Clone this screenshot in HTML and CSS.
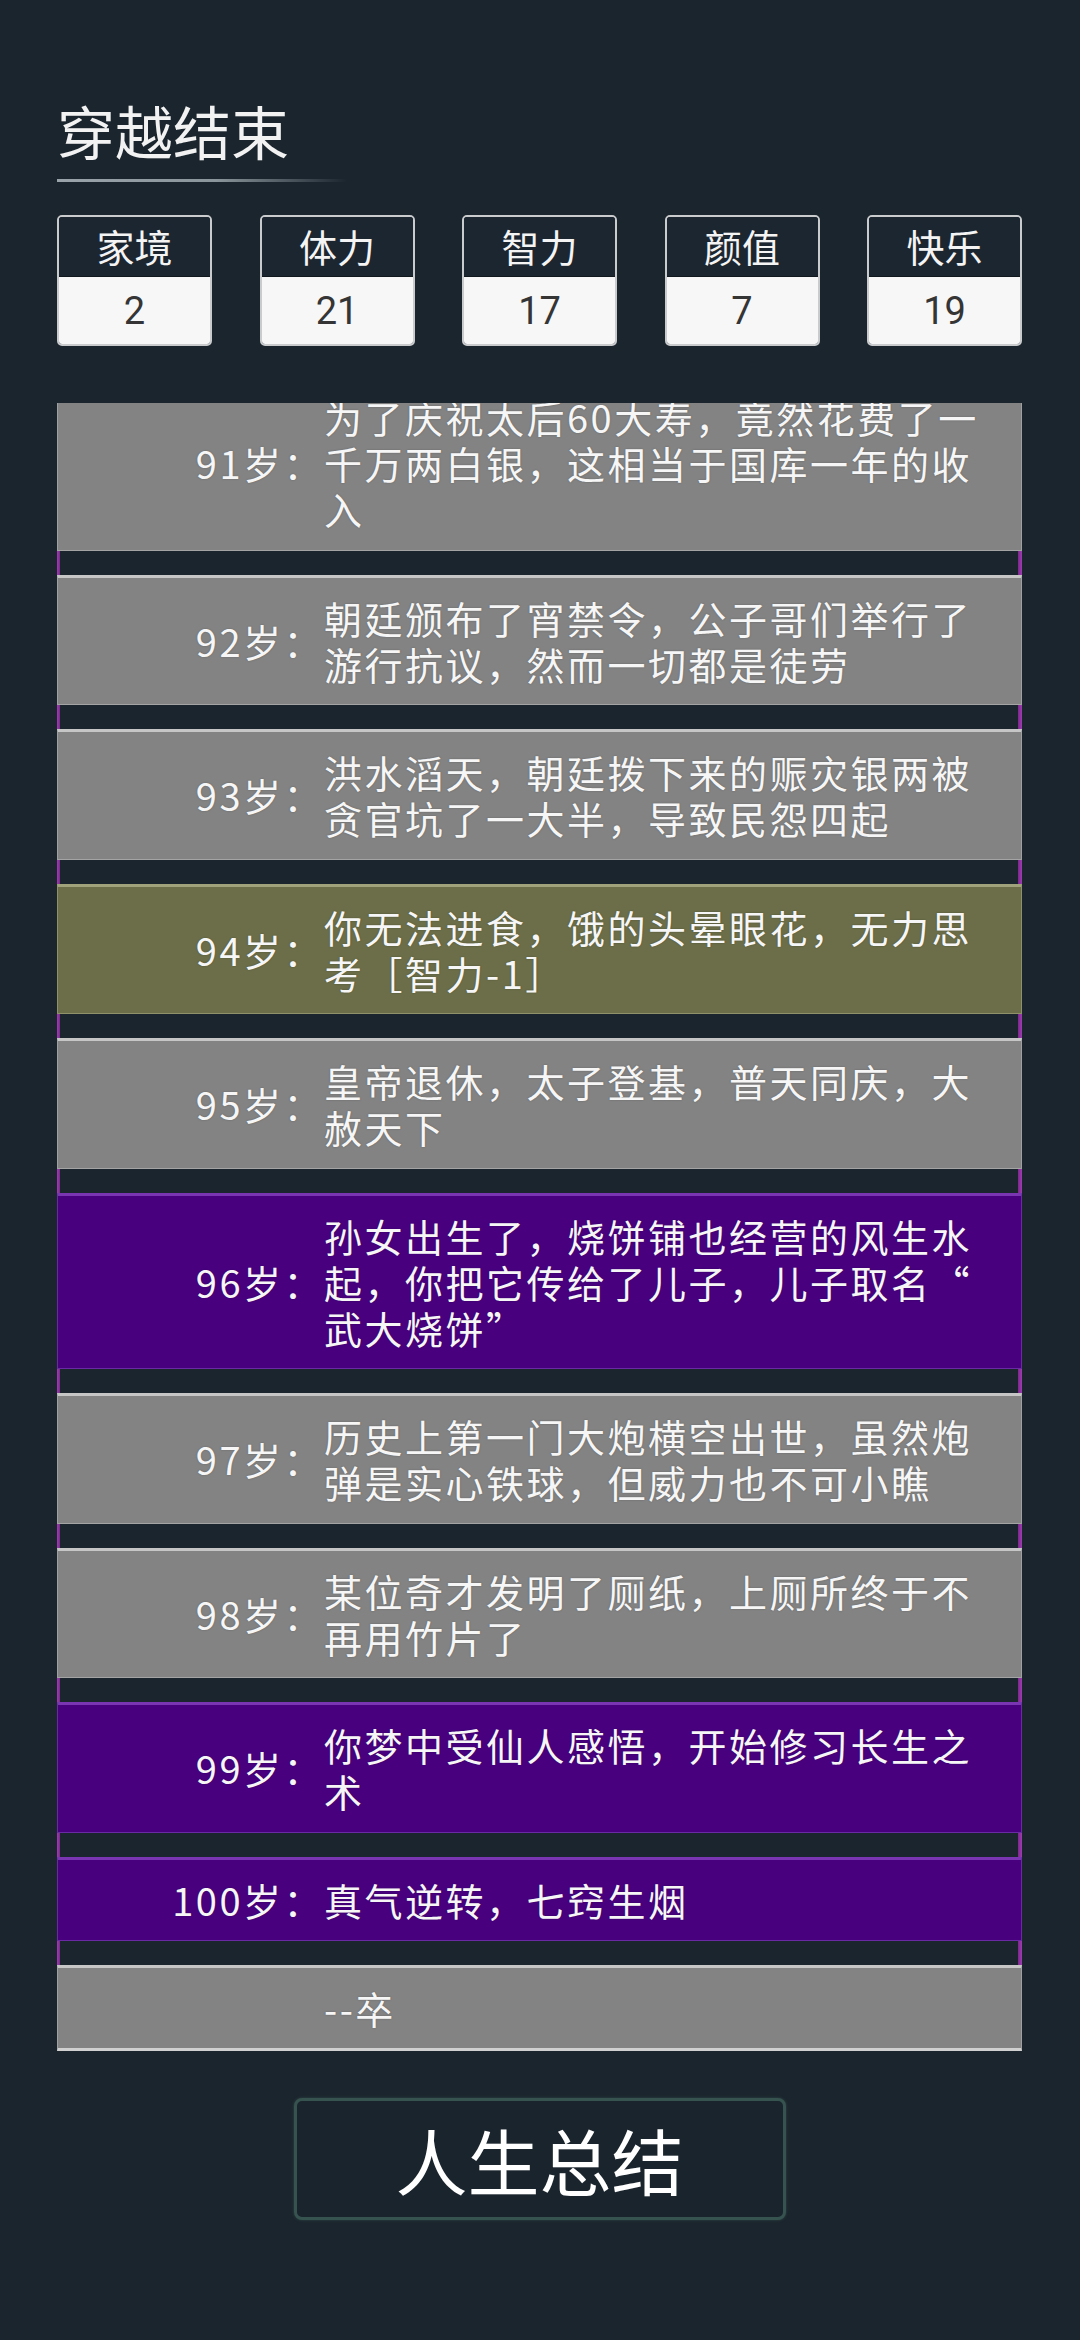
FILE: index.html
```html
<!DOCTYPE html>
<html lang="zh-CN">
<head>
<meta charset="utf-8">
<title>穿越结束</title>
<link rel="stylesheet" href="styles.css">
</head>
<body>
<div class="page">
  <header class="head">
    <h1 class="title">穿越结束</h1>
    <div class="rule"></div>
  </header>

  <div class="stats">
    <div class="stat"><div class="stat-name">家境</div><div class="stat-val">2</div></div>
    <div class="stat"><div class="stat-name">体力</div><div class="stat-val">21</div></div>
    <div class="stat"><div class="stat-name">智力</div><div class="stat-val">17</div></div>
    <div class="stat"><div class="stat-name">颜值</div><div class="stat-val">7</div></div>
    <div class="stat"><div class="stat-name">快乐</div><div class="stat-val">19</div></div>
  </div>

  <div class="log">
    <div class="log-inner">
      <div class="entry"><div class="age">91岁：</div><div class="text">为了庆祝太后60大寿，竟然花费了一千万两白银，这相当于国库一年的收入</div></div>
      <div class="entry"><div class="age">92岁：</div><div class="text">朝廷颁布了宵禁令，公子哥们举行了游行抗议，然而一切都是徒劳</div></div>
      <div class="entry"><div class="age">93岁：</div><div class="text">洪水滔天，朝廷拨下来的赈灾银两被贪官坑了一大半，导致民怨四起</div></div>
      <div class="entry bad"><div class="age">94岁：</div><div class="text">你无法进食，饿的头晕眼花，无力思考［智力-1］</div></div>
      <div class="entry"><div class="age">95岁：</div><div class="text">皇帝退休，太子登基，普天同庆，大赦天下</div></div>
      <div class="entry rare"><div class="age">96岁：</div><div class="text">孙女出生了，烧饼铺也经营的风生水起，你把它传给了儿子，儿子取名“武大烧饼”</div></div>
      <div class="entry"><div class="age">97岁：</div><div class="text">历史上第一门大炮横空出世，虽然炮弹是实心铁球，但威力也不可小瞧</div></div>
      <div class="entry"><div class="age">98岁：</div><div class="text">某位奇才发明了厕纸，上厕所终于不再用竹片了</div></div>
      <div class="entry rare"><div class="age">99岁：</div><div class="text">你梦中受仙人感悟，开始修习长生之术</div></div>
      <div class="entry rare"><div class="age">100岁：</div><div class="text">真气逆转，七窍生烟</div></div>
      <div class="entry end"><div class="age"></div><div class="text">--卒</div></div>
    </div>
  </div>

  <button class="summary" type="button">人生总结</button>
</div>
</body>
</html>
```

FILE: styles.css
```css
* { box-sizing: border-box; }

html, body {
  margin: 0;
  padding: 0;
  background: #1b252d;
}

body {
  min-height: 2340px;
  font-family: "Noto Sans CJK SC", "Noto Sans", sans-serif;
  color: #f4f4f4;
}

.page {
  width: 1080px;
  padding: 97px 58px 0 57px;
}

.head {
  display: flex;
  flex-direction: column;
}

.title {
  margin: 0;
  font-size: 58px;
  line-height: 67px;
  font-weight: 400;
  color: #f2f2f2;
  letter-spacing: 0;
}

.rule {
  margin-top: 15px;
  width: 290px;
  height: 3px;
  background: linear-gradient(to right, #9aa3aa 0%, #8a949b 55%, rgba(138,148,155,0) 100%);
}

.stats {
  margin-top: 33px;
  display: flex;
  justify-content: space-between;
}

.stat {
  width: 155px;
  height: 131px;
  border: 2px solid #c9cbcd;
  border-radius: 5px;
  overflow: hidden;
  display: flex;
  flex-direction: column;
}

.stat-name {
  height: 60px;
  background: #1c2630;
  color: #f4f4f4;
  font-size: 38px;
  line-height: 58px;
  text-align: center;
  border-bottom: 1px solid #11181e;
}

.stat-val {
  flex: 1;
  background: #f7f7f7;
  color: #353535;
  font-family: Roboto, "Noto Sans", sans-serif;
  font-size: 38px;
  display: flex;
  align-items: center;
  justify-content: center;
}

.log {
  margin-top: 57px;
  overflow: hidden;
}

.log-inner {
  margin-top: -29px;
  display: flex;
  flex-direction: column;
  gap: 24px;
  background: linear-gradient(to right,
    #a23ab4 0, #7a2a8c 3px, transparent 3px,
    transparent calc(100% - 4px), #7a2a8c calc(100% - 4px), #a23ab4 100%);
}

.entry {
  display: flex;
  align-items: center;
  background: #838383;
  border-top: 3px solid #c6c6c6;
  border-bottom: 1px solid #a4a4a4;
  border-left: 1px solid #a0a0a0;
  border-right: 1px solid #a0a0a0;
  padding: 17px 37px 17.5px 0;
  font-size: 38px;
  line-height: 46px;
  letter-spacing: 2.5px;
  color: #f6f6f6;
  text-shadow: 0 0 2px rgba(0,0,0,0.25);
}

.entry.bad {
  background: #6b6e48;
  border-top-color: #9fa27a;
  border-bottom-color: #8e916a;
  border-left-color: #8e916a;
  border-right-color: #8e916a;
}

.entry.rare {
  background: #48007f;
  border-top-color: #7a35b2;
  border-bottom-color: #6a2aa3;
  border-left-color: #6a2aa3;
  border-right-color: #6a2aa3;
}

.entry.end {
  border-bottom: 3px solid #d0d0d0;
  padding-bottom: 16.5px;
}

.age {
  width: 266px;
  flex: none;
  text-align: right;
  white-space: nowrap;
}

.text {
  width: 660px;
  flex: none;
  line-break: anywhere;
}

.summary {
  display: block;
  margin: 47px auto 0;
  width: 492px;
  height: 122px;
  background: #1a242c;
  border: 3px solid #36534f;
  border-radius: 8px;
  box-shadow: 0 0 3px rgba(70,110,100,0.5);
  color: #ffffff;
  font-family: "Noto Sans CJK SC", sans-serif;
  font-size: 72px;
  line-height: 1;
  padding: 0;
  letter-spacing: 0;
}
```
